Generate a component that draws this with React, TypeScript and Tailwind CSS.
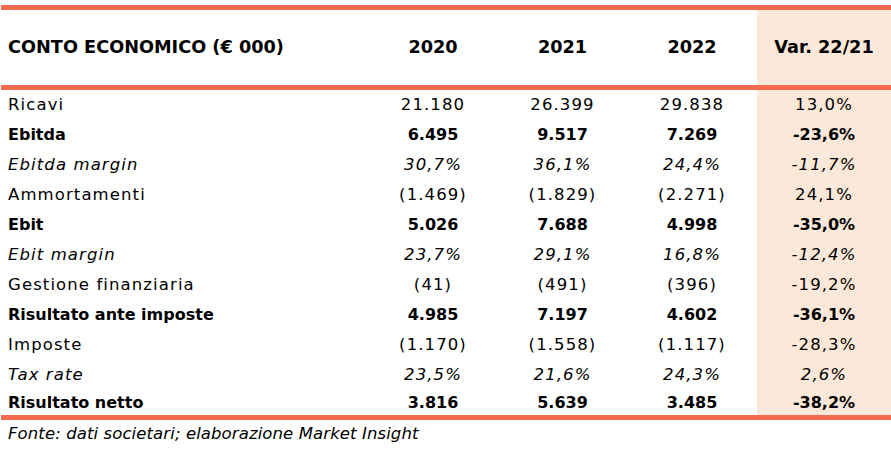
const rows: { label: string; values: string[]; kind: "normal" | "bold" | "italic" }[] = [
  { label: "Ricavi", values: ["21.180", "26.399", "29.838", "13,0%"], kind: "normal" },
  { label: "Ebitda", values: ["6.495", "9.517", "7.269", "-23,6%"], kind: "bold" },
  { label: "Ebitda margin", values: ["30,7%", "36,1%", "24,4%", "-11,7%"], kind: "italic" },
  { label: "Ammortamenti", values: ["(1.469)", "(1.829)", "(2.271)", "24,1%"], kind: "normal" },
  { label: "Ebit", values: ["5.026", "7.688", "4.998", "-35,0%"], kind: "bold" },
  { label: "Ebit margin", values: ["23,7%", "29,1%", "16,8%", "-12,4%"], kind: "italic" },
  { label: "Gestione finanziaria", values: ["(41)", "(491)", "(396)", "-19,2%"], kind: "normal" },
  { label: "Risultato ante imposte", values: ["4.985", "7.197", "4.602", "-36,1%"], kind: "bold" },
  { label: "Imposte", values: ["(1.170)", "(1.558)", "(1.117)", "-28,3%"], kind: "normal" },
  { label: "Tax rate", values: ["23,5%", "21,6%", "24,3%", "2,6%"], kind: "italic" },
  { label: "Risultato netto", values: ["3.816", "5.639", "3.485", "-38,2%"], kind: "bold" },
];

// regular and italic rows get a bit of tracking, the reference font is wider
const styleFor = (kind: string) =>
  kind === "bold"
    ? "font-bold text-[16px]"
    : kind === "italic"
      ? "italic text-[16.5px] tracking-[1.1px]"
      : "text-[16.5px] tracking-[1.1px]";

const App = () => {
  return (
    <div className="w-[891px] h-[451px] bg-white text-black font-['DejaVu_Sans',sans-serif] pt-[5px] pl-[1px]">
      <div className="border-t-[5px] border-[#f66a4f]">
        {/* header */}
        <div className="grid grid-cols-[367px_130px_129px_130px_1fr] h-[75px] items-center font-bold text-[17.7px]">
          <div className="pl-[7px]">CONTO ECONOMICO (€ 000)</div>
          <div className="text-center">2020</div>
          <div className="text-center">2021</div>
          <div className="text-center">2022</div>
          <div className="text-center bg-[#fce8d8] h-full flex items-center justify-center">Var. 22/21</div>
        </div>
        <div className="h-[5px] bg-[#f66a4f]" />
        {rows.map((r, i) => (
          <div
            key={r.label}
            className={`grid grid-cols-[367px_130px_129px_130px_1fr] ${i === rows.length - 1 ? "h-[25px]" : "h-[30px]"} ${styleFor(r.kind)}`}
          >
            <div className="pl-[7px] flex items-center">{r.label}</div>
            <div className="flex items-center justify-center">{r.values[0]}</div>
            <div className="flex items-center justify-center">{r.values[1]}</div>
            <div className="flex items-center justify-center">{r.values[2]}</div>
            <div className="flex items-center justify-center bg-[#fce8d8]">{r.values[3]}</div>
          </div>
        ))}
        <div className="h-[5px] bg-[#f66a4f]" />
        <div className="pl-[7px] pt-[2px] italic text-[16.5px] tracking-[0.1px]">
          Fonte: dati societari; elaborazione Market Insight
        </div>
      </div>
    </div>
  );
};

export default App;
